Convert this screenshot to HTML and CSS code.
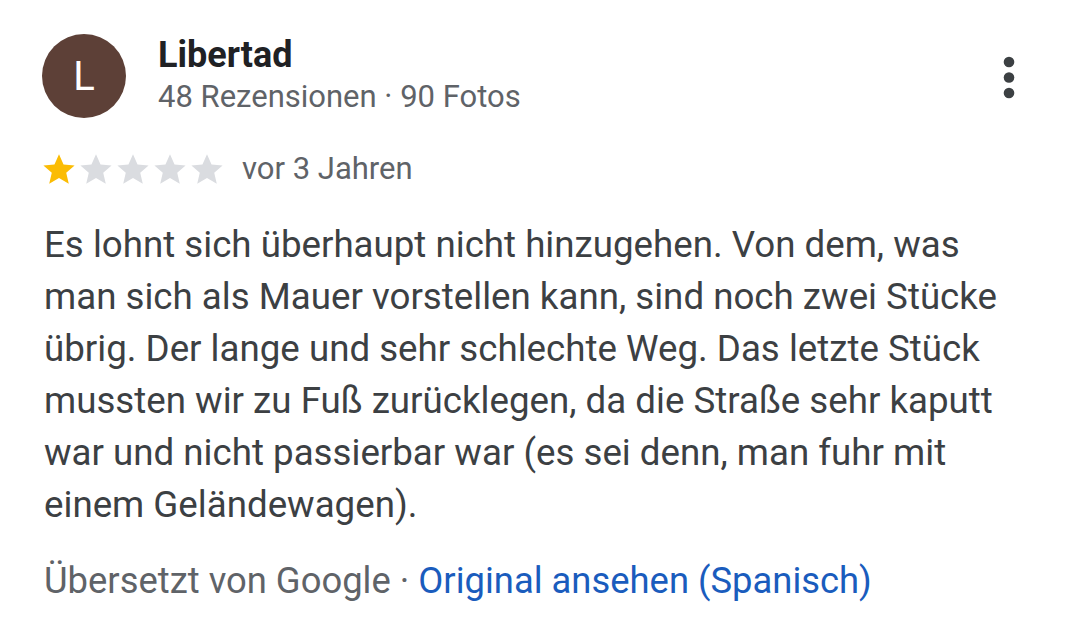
FILE: index.html
```html
<!DOCTYPE html>
<html lang="de">
<head>
    <meta charset="UTF-8">
    <meta name="viewport" content="width=device-width, initial-scale=1.0">
    <title>Rezension</title>
    <link rel="stylesheet" href="styles.css">
</head>
<body>
    <div class="review">
        <header class="review-header">
            <div class="avatar">L</div>
            <div class="author">
                <div class="author-name">Libertad</div>
                <div class="author-meta">48 Rezensionen · 90 Fotos</div>
            </div>
            <button class="menu-button" aria-label="Mehr">
                <svg width="14" height="43" viewBox="0 0 14 43">
                    <circle cx="7" cy="6" r="5.3" fill="#3c4043"/>
                    <circle cx="7" cy="21.5" r="5.3" fill="#3c4043"/>
                    <circle cx="7" cy="37" r="5.3" fill="#3c4043"/>
                </svg>
            </button>
        </header>

        <div class="rating-row">
            <div class="stars">
                <svg class="star filled" viewBox="0 0 24 24"><path d="M12 1.6l3.2 7.2 7.8.7-5.9 5.2 1.8 7.7L12 18.4l-6.9 4 1.8-7.7L1 9.5l7.8-.7z"/></svg>
                <svg class="star" viewBox="0 0 24 24"><path d="M12 1.6l3.2 7.2 7.8.7-5.9 5.2 1.8 7.7L12 18.4l-6.9 4 1.8-7.7L1 9.5l7.8-.7z"/></svg>
                <svg class="star" viewBox="0 0 24 24"><path d="M12 1.6l3.2 7.2 7.8.7-5.9 5.2 1.8 7.7L12 18.4l-6.9 4 1.8-7.7L1 9.5l7.8-.7z"/></svg>
                <svg class="star" viewBox="0 0 24 24"><path d="M12 1.6l3.2 7.2 7.8.7-5.9 5.2 1.8 7.7L12 18.4l-6.9 4 1.8-7.7L1 9.5l7.8-.7z"/></svg>
                <svg class="star" viewBox="0 0 24 24"><path d="M12 1.6l3.2 7.2 7.8.7-5.9 5.2 1.8 7.7L12 18.4l-6.9 4 1.8-7.7L1 9.5l7.8-.7z"/></svg>
            </div>
            <span class="review-date">vor 3 Jahren</span>
        </div>

        <p class="review-text">Es lohnt sich überhaupt nicht hinzugehen. Von dem, was man sich als Mauer vorstellen kann, sind noch zwei Stücke übrig. Der lange und sehr schlechte Weg. Das letzte Stück mussten wir zu Fuß zurücklegen, da die Straße sehr kaputt war und nicht passierbar war (es sei denn, man fuhr mit einem Geländewagen).</p>

        <div class="translation">
            <span class="translated-by">Übersetzt von Google · </span><a class="original-link" href="#">Original ansehen (Spanisch)</a>
        </div>
    </div>
</body>
</html>
```

FILE: styles.css
```css
body {
    margin: 0;
    background-color: #fff;
    font-family: Roboto, "Noto Sans", Arial, sans-serif;
    color: #3c4043;
}

.review {
    padding: 33px 44px 0 42px;
}

.review-header {
    display: flex;
    align-items: flex-start;
}

.avatar {
    width: 84px;
    height: 84px;
    margin-top: 1px;
    border-radius: 50%;
    background-color: #5d4037;
    color: #fff;
    font-size: 40px;
    display: flex;
    align-items: center;
    justify-content: center;
    flex-shrink: 0;
}

.author {
    margin-left: 32px;
    flex: 1;
}

.author-name {
    font-size: 36px;
    font-weight: bold;
    color: #202124;
    line-height: 44px;
}

.author-meta {
    font-size: 31px;
    color: #5f6368;
    line-height: 40px;
}

.menu-button {
    background: none;
    border: none;
    padding: 0;
    margin-top: 23px;
    margin-right: 19px;
    display: flex;
}

.rating-row {
    display: flex;
    align-items: center;
    margin-top: 31px;
}

.stars {
    display: flex;
    gap: 3px;
}

.star {
    width: 34px;
    height: 34px;
    fill: #dadce0;
}

.star.filled {
    fill: #fbbc04;
}

.review-date {
    font-size: 31px;
    line-height: 40px;
    color: #5f6368;
    margin-left: 18px;
}

.review-text {
    font-size: 36.7px;
    line-height: 52px;
    margin: 30px 0 0 2px;
    color: #3c4043;
}

.translation {
    font-size: 36.4px;
    line-height: 52px;
    margin-top: 24px;
    margin-left: 2px;
    color: #5f6368;
}

.original-link {
    color: #1a5cbd;
    text-decoration: none;
}
```
